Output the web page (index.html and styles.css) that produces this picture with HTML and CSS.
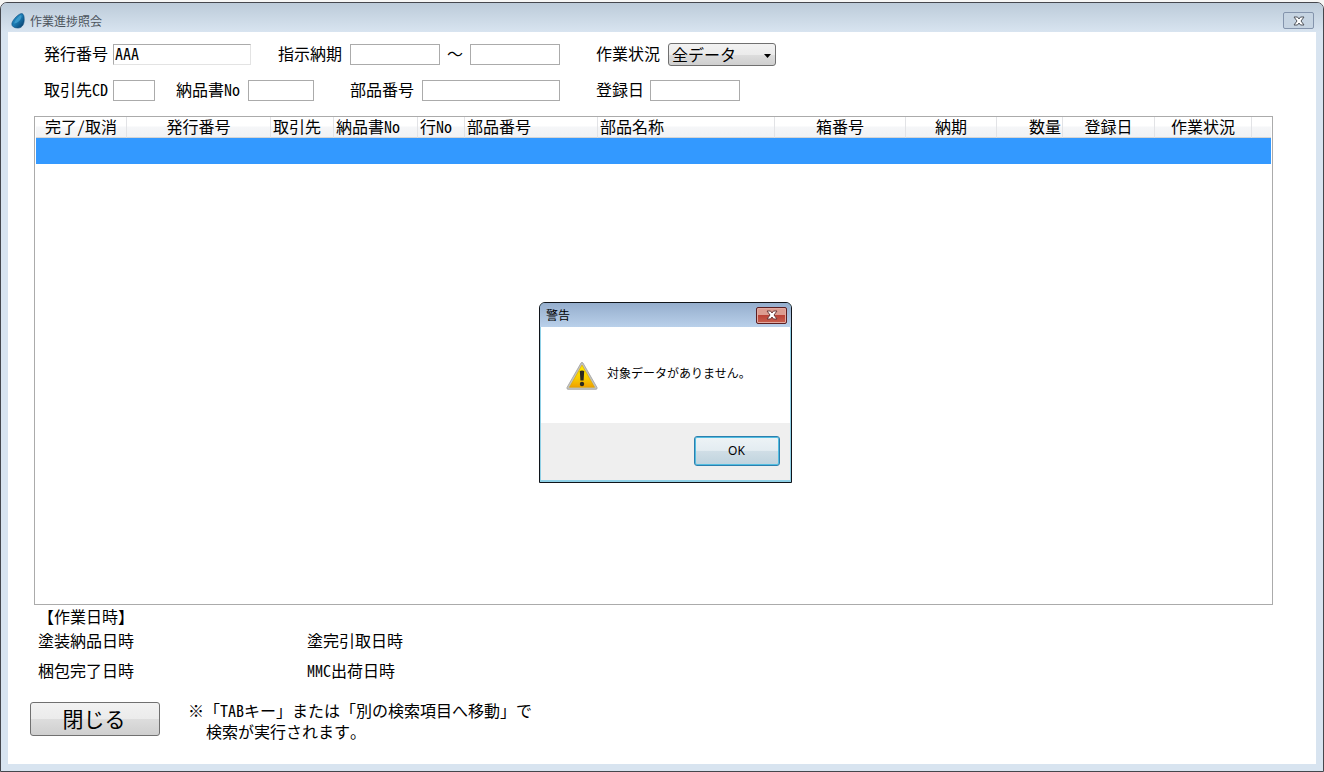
FILE: index.html
```html
<!DOCTYPE html>
<html lang="ja">
<head>
<meta charset="utf-8">
<title>作業進捗照会</title>
<link rel="stylesheet" href="styles.css">
</head>
<body>
<div class="window">
  <header class="titlebar">
    <svg class="logo" viewBox="0 0 14 16" aria-hidden="true">
      <defs><linearGradient id="drop" x1="0" y1="0" x2="1" y2="1"><stop offset="0" stop-color="#2a8fc4"/><stop offset=".5" stop-color="#1a78b0"/><stop offset="1" stop-color="#04355f"/></linearGradient></defs>
      <path d="M9.500 .8C12.500 -.2 13.300 3 13.200 7C13.100 12 10.500 15.300 6.500 15C3 14.800 .8 13.500 .8 11C.9 8 6 2 9.500 .8Z" fill="url(#drop)" stroke="#0b4c7c" stroke-width=".6"/>
      <path d="M9 2.500C6.500 4.500 3.500 8 3 10.500C6 10.500 10 7.500 10.500 3.500C10.500 2.500 10 2 9 2.500Z" fill="#58b5de" opacity=".55"/>
    </svg>
    <h1 class="title">作業進捗照会</h1>
    <button class="close" type="button" aria-label="ウィンドウを閉じる">
      <svg class="cross" viewBox="0 0 12 10" aria-hidden="true"><path d="M1 1H4.500L6 3L7.500 1H11L8 5L11 9H7.500L6 7L4.500 9H1L4 5Z" fill="#fff" stroke="#50555c"/></svg>
    </button>
  </header>
  <main class="content">
    <form class="search">
      <div class="row">
        <div class="field tight"><label for="issue">発行番号</label><input class="box w138 readonly" id="issue" value="AAA" readonly></div>
        <div class="field gap-m"><label for="due1">指示納期</label><input class="box w90" id="due1"><span class="tilde">～</span><input class="box w90" aria-label="指示納期 終了"></div>
        <div class="field gap-l"><label for="state">作業状況</label><span class="select-wrap"><select class="select" id="state"><option>全データ</option></select><svg class="arrow" viewBox="0 0 7 4" aria-hidden="true"><path d="M0 0H7L3.500 4Z"/></svg></span></div>
      </div>
      <div class="row">
        <div class="field tight"><label for="client">取引先CD</label><input class="box w42" id="client"></div>
        <div class="field gap-s"><label for="slip">納品書No</label><input class="box w66" id="slip"></div>
        <div class="field gap-l"><label for="part">部品番号</label><input class="box w138" id="part"></div>
        <div class="field gap-l date"><label for="reg">登録日</label><input class="box w90" id="reg"></div>
      </div>
    </form>
    <div class="grid">
      <table class="table">
        <colgroup><col class="c91"><col class="c144"><col class="c63"><col class="c84"><col class="c47"><col class="c133"><col class="c177"><col class="c131"><col class="c91"><col class="c66"><col class="c92"><col class="c97"><col></colgroup>
        <thead><tr><th>完了/取消</th><th>発行番号</th><th class="left">取引先</th><th class="left">納品書No</th><th class="left">行No</th><th class="left">部品番号</th><th class="left">部品名称</th><th>箱番号</th><th>納期</th><th class="right">数量</th><th>登録日</th><th>作業状況</th><th></th></tr></thead>
        <tbody><tr class="selected"><td colspan="13"></td></tr></tbody>
      </table>
    </div>
    <section class="times">
      <h2 class="heading">【作業日時】</h2>
      <div class="pair"><span>塗装納品日時</span><span>塗完引取日時</span></div>
      <div class="pair"><span>梱包完了日時</span><span>MMC出荷日時</span></div>
    </section>
    <footer class="bottom">
      <button class="exit" type="button">閉じる</button>
      <p class="note">※「TABキー」または「別の検索項目へ移動」で
検索が実行されます。</p>
    </footer>
  </main>
</div>
<div class="dialog" role="alertdialog" aria-labelledby="dlg-title" aria-describedby="dlg-msg">
  <div class="dialog-bar">
    <h2 class="dialog-title" id="dlg-title">警告</h2>
    <button class="dialog-close" type="button" aria-label="閉じる">
      <svg class="cross" viewBox="0 0 12 10" aria-hidden="true"><path d="M1 1H4.500L6 3L7.500 1H11L8 5L11 9H7.500L6 7L4.500 9H1L4 5Z" fill="#fff" stroke="#6b3a3a"/></svg>
    </button>
  </div>
  <div class="dialog-body">
    <svg class="warn" viewBox="0 0 32 29" aria-hidden="true">
      <defs><linearGradient id="amber" x1="0" y1="0" x2="0" y2="1"><stop offset="0" stop-color="#ffee00"/><stop offset=".6" stop-color="#f8cc00"/><stop offset="1" stop-color="#f0a000"/></linearGradient></defs>
      <path d="M15 2Q16 .6 17 2L31 26.500Q31.500 28.300 30 28.300H2Q.5 28.300 1 26.500Z" fill="#c4c4c0" stroke="#a0a09c" stroke-width=".8"/>
      <path d="M16 4L28.600 26.300H3.400Z" fill="url(#amber)" stroke="#d9a400" stroke-width=".6"/>
      <path d="M13.800 10Q16 8.800 18.200 10L17.600 19.500H14.400Z" fill="#2b2a20"/>
      <circle cx="16" cy="23" r="2.200" fill="#2b2a20"/>
    </svg>
    <p class="message" id="dlg-msg">対象データがありません。</p>
  </div>
  <div class="dialog-foot"><button class="ok" type="button">OK</button></div>
</div>
</body>
</html>
```
FILE: styles.css
```css
* { box-sizing: border-box; }
body {
  margin: 0;
  padding-top: 2px;
  min-height: 100vh;
  display: flex;
  background: #f6f6f5;
  color: #000;
  font: 16px/20px "Noto Sans Mono CJK JP", "Noto Sans CJK JP", monospace;
}
h1, h2, p { margin: 0; font-weight: 400; }
input, select, button { font: inherit; color: inherit; margin: 0; }
.window {
  flex: 1;
  display: flex;
  flex-direction: column;
  padding: 0 7px 7px;
  border: 1px solid #45474d;
  border-radius: 7px 7px 0 0;
  background: #d8e4f0;
}
.titlebar {
  display: flex;
  align-items: center;
  height: 29px;
  margin: 0 -7px;
  padding: 6px 9px 0 10px;
  border-radius: 6px 6px 0 0;
  background: linear-gradient(#bccbd9, #d8e4f0);
}
.logo { width: 14px; height: 16px; }
.title {
  flex: 1;
  padding-left: 5px;
  font: 12px/16px "Noto Sans CJK JP", sans-serif;
  color: #4c545c;
}
.close {
  display: flex;
  align-items: center;
  justify-content: center;
  width: 31px;
  height: 17px;
  padding: 0;
  border: 1px solid #8494ac;
  border-radius: 2px;
  background: #c6d4e2;
}
.cross { width: 12px; height: 10px; }
.content { flex: 1; background: #fff; padding: 12px 43px 0 22px; }
.search { padding: 0 0 15px 14px; }
.row { display: flex; height: 21px; align-items: center; }
.row + .row { margin-top: 15px; }
.field { display: flex; align-items: center; gap: 8px; white-space: nowrap; }
.field label { padding-bottom: 3px; }
.tight { gap: 5px; }
.date { gap: 6px; }
.gap-s { margin-left: 21px; }
.gap-m { margin-left: 27px; }
.gap-l { margin-left: 36px; }
.tilde { width: 14px; display: flex; justify-content: center; padding-bottom: 3px; }
.box { height: 21px; padding: 0 1px 3px; border: 1px solid #ababab; background: #fff; }
.readonly { border-color: #ababab #e3e3e3 #e3e3e3 #ababab; }
.w42 { width: 42px; }
.w66 { width: 66px; }
.w90 { width: 90px; }
.w138 { width: 138px; }
.select-wrap { position: relative; display: flex; }
.select {
  appearance: none;
  width: 108px;
  height: 23px;
  padding: 0 3px 1px;
  border: 1px solid #707070;
  border-radius: 3px;
  background: linear-gradient(#f2f2f2, #ebebeb 50%, #dddddd 50%, #cfcfcf);
}
.arrow { position: absolute; right: 5px; top: 11px; width: 7px; height: 4px; pointer-events: none; }
.grid {
  height: 489px;
  margin-left: 4px;
  padding: 0 1px;
  border: 1px solid #ababab;
}
.table { width: 100%; table-layout: fixed; border-collapse: separate; border-spacing: 0; }
.table th {
  height: 21px;
  padding: 0 0 1px;
  border-right: 1px solid #e2e3e6;
  border-bottom: 1px solid #d5d5d5;
  background: linear-gradient(#fff 0 45%, #f5f6f8 50%, #f1f2f4);
  font-weight: 400;
  line-height: 19px;
  white-space: nowrap;
}
.table th:last-child { border-right: 0; }
.table .left { text-align: left; padding-left: 2px; }
.table .right { text-align: right; padding-right: 1px; }
.table td { height: 26px; padding: 0; }
.selected { background: #3399ff; }
.c47 { width: 47px; }
.c63 { width: 63px; }
.c66 { width: 66px; }
.c84 { width: 84px; }
.c91 { width: 91px; }
.c92 { width: 92px; }
.c97 { width: 97px; }
.c131 { width: 131px; }
.c133 { width: 133px; }
.c144 { width: 144px; }
.c177 { width: 177px; }
.times { padding: 1px 0 0 8px; }
.heading { font-size: 16px; }
.pair { display: grid; grid-template-columns: 269px 1fr; margin-top: 4px; }
.pair + .pair { margin-top: 10px; }
.bottom { display: flex; align-items: flex-end; gap: 28px; margin-top: 20px; }
.exit {
  width: 130px;
  height: 34px;
  margin-bottom: 6px;
  padding: 0 2px 3px 0;
  border: 1px solid #707070;
  border-radius: 3px;
  background: linear-gradient(#f2f2f2, #ebebeb 50%, #dddddd 50%, #cfcfcf);
  font-size: 21px;
  line-height: 30px;
}
.note { padding-left: 18px; text-indent: -18px; line-height: 21px; white-space: pre-line; }
.dialog {
  position: absolute;
  left: 539px;
  top: 302px;
  width: 253px;
  border: 1px solid #10141a;
  border-radius: 6px 6px 0 0;
  background: #8fd0e6;
  padding: 0 1px 2px;
  font: 12px/16px "Noto Sans CJK JP", sans-serif;
}
.dialog-bar {
  display: flex;
  align-items: center;
  justify-content: space-between;
  height: 24px;
  margin: 0 -1px;
  padding: 0 4px 0 6px;
  border-radius: 5px 5px 0 0;
  background: linear-gradient(#95aecd, #b9d0ea);
}
.dialog-title { font-size: 12px; }
.dialog-close {
  display: flex;
  align-items: center;
  justify-content: center;
  width: 31px;
  height: 17px;
  padding: 0;
  border: 1px solid #5c1f22;
  border-radius: 2px;
  background: linear-gradient(#dc9c90 0 45%, #bb4337 50%, #c8604f);
  box-shadow: inset 0 0 0 1px #e3aaa1;
}
.dialog-body { display: flex; align-items: center; gap: 9px; height: 96px; padding: 0 26px 0 25px; background: #fff; }
.warn { width: 32px; height: 29px; }
.message { flex: 1; white-space: nowrap; padding-bottom: 4px; }
.dialog-foot { display: flex; justify-content: flex-end; padding: 13px 10px 14px; background: #efefef; }
.ok {
  width: 86px;
  height: 30px;
  padding: 0 1px 1px 0;
  border: 1px solid #2c7fae;
  border-radius: 3px;
  background: linear-gradient(#edf3f6, #e3ecf1 48%, #d0dee6 50%, #bfd3de);
  box-shadow: inset 0 0 0 1px #52bde0;
  font: 12px/16px "Noto Sans", sans-serif;
}
```
